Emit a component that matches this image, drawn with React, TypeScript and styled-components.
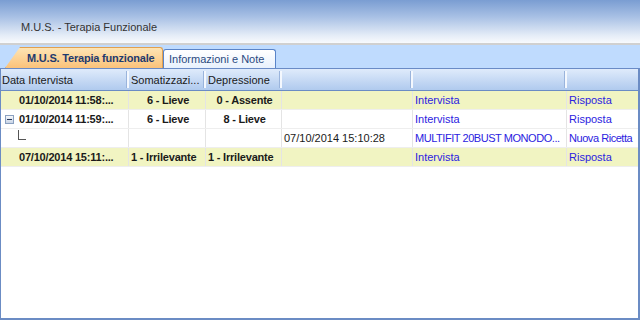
import React from 'react';
import styled, { createGlobalStyle } from 'styled-components';

const GlobalStyle = createGlobalStyle`
  html, body {
    margin: 0;
    padding: 0;
    background: #ffffff;
  }
  body {
    font-family: Tahoma, 'Liberation Sans', sans-serif;
    font-size: 11px;
  }
`;

const COLS = '128px 77px 76px 131px 154px 1fr';

const Window = styled.div`
  width: 640px;
  height: 320px;
  display: flex;
  flex-direction: column;
  overflow: hidden;
  background: #ffffff;
  font-family: 'Liberation Sans', sans-serif;
  font-size: 11px;
`;

const TitleBar = styled.div`
  height: 45px;
  display: flex;
  align-items: flex-end;
  padding: 0 0 10px 21px;
  box-sizing: border-box;
  background: linear-gradient(#7a9dd2 0%, #a9c1e5 40%, #e4ecf7 82%, #f8fafd 100%);
  border-bottom: 2px solid #d0d0d0;
  color: #333333;
`;

const TabStrip = styled.div`
  height: 24px;
  box-sizing: border-box;
  background: #bfdbfe;
  display: flex;
  align-items: flex-end;
  padding-left: 5px;
  border-bottom: 1px solid #6a8bc6;
`;

const Tab = styled.div<{ active?: boolean }>`
  height: ${p => (p.active ? '21px' : '19px')};
  display: flex;
  align-items: center;
  box-sizing: border-box;
  white-space: nowrap;
  ${p => p.active
    ? `
      width: 158px;
      padding: 0 0 0 21px;
      font-weight: bold;
      letter-spacing: -0.2px;
      color: #1e3a6e;
      background: linear-gradient(#fde4b4, #fbc27a);
      border: 1px solid #e0a050;
      border-bottom: none;
      border-radius: 3px 3px 0 0;
      clip-path: polygon(15px 0, 100% 0, 100% 100%, 0 100%);
    `
    : `
      width: 113px;
      padding: 0 0 0 5px;
      color: #2a4a80;
      background: linear-gradient(#ffffff, #e8f1fd);
      border: 1px solid #5a84c8;
      border-bottom: none;
      border-radius: 3px 3px 0 0;
    `}
`;

const Grid = styled.div`
  flex: 1;
  display: flex;
  flex-direction: column;
  border-left: 1px solid #6b8cc4;
  border-right: 2px solid #6b8cc4;
  border-bottom: 2px solid #6b8cc4;
`;

const HeaderRow = styled.div`
  display: grid;
  grid-template-columns: ${COLS};
  height: 22px;
  box-sizing: border-box;
  background: linear-gradient(#dfebfb, #b0caee);
  border-bottom: 1px solid #6b8cc4;
`;

const HeaderCell = styled.div`
  display: flex;
  align-items: center;
  padding-left: 2px;
  color: #1a1a1a;
  white-space: nowrap;
  overflow: hidden;
  border-right: 2px solid #f4f8fe;
  box-shadow: inset -1px 0 0 #9ab4dc;
  margin: 2px 0;
  &:first-child {
    margin-left: -1px;
  }
  &:last-child {
    border-right: none;
    box-shadow: none;
  }
`;

const Row = styled.div<{ shaded?: boolean }>`
  display: grid;
  grid-template-columns: ${COLS};
  height: 19px;
  background: ${p => (p.shaded ? '#f1f4c2' : '#ffffff')};
  border-bottom: 1px solid #eeeeee;
  box-sizing: border-box;
`;

const Cell = styled.div<{ bold?: boolean; link?: boolean; center?: boolean; tight?: boolean }>`
  display: flex;
  align-items: center;
  justify-content: ${p => (p.center ? 'center' : 'flex-start')};
  padding-left: 2px;
  font-weight: ${p => (p.bold ? 'bold' : 'normal')};
  letter-spacing: ${p => (p.tight ? '-0.45px' : p.bold ? '-0.2px' : '0')};
  color: ${p => (p.link ? '#2b22e0' : '#1a1a1a')};
  white-space: nowrap;
  overflow: hidden;
  border-right: 1px solid #e4e4e4;
  &:last-child {
    border-right: none;
  }
`;

const FirstCell = styled(Cell)`
  padding-left: 4px;
  gap: 5px;
`;

const Spacer = styled.span`
  width: 9px;
  flex: none;
`;

const Expander = styled.span`
  width: 9px;
  height: 9px;
  flex: none;
  box-sizing: border-box;
  border: 1px solid #8aa0c0;
  background: linear-gradient(#f6f8fb, #c8d4e6);
  position: relative;
  &::after {
    content: '';
    position: absolute;
    left: 1px;
    right: 1px;
    top: 3px;
    height: 1px;
    background: #2a3a5a;
  }
`;

const TreeLine = styled.span`
  width: 7px;
  height: 9px;
  margin: -6px 0 0 13px;
  border-left: 1px solid #555;
  border-bottom: 1px solid #555;
`;

const rows = [
  { date: '01/10/2014 11:58:...', som: '6 - Lieve', dep: '0 - Assente', shaded: true },
  { date: '01/10/2014 11:59:...', som: '6 - Lieve', dep: '8 - Lieve', expanded: true },
];

function App() {
  return (
    <Window>
      <GlobalStyle />
      <TitleBar>M.U.S. - Terapia Funzionale</TitleBar>
      <TabStrip>
        <Tab active>M.U.S. Terapia funzionale</Tab>
        <Tab>Informazioni e Note</Tab>
      </TabStrip>
      <Grid>
        <HeaderRow>
          <HeaderCell>Data Intervista</HeaderCell>
          <HeaderCell>Somatizzazi...</HeaderCell>
          <HeaderCell>Depressione</HeaderCell>
          <HeaderCell />
          <HeaderCell />
          <HeaderCell />
        </HeaderRow>
        {rows.map(r => (
          <Row key={r.date} shaded={r.shaded}>
            <FirstCell bold>
              {r.expanded ? <Expander /> : <Spacer />}
              {r.date}
            </FirstCell>
            <Cell bold center>{r.som}</Cell>
            <Cell bold center>{r.dep}</Cell>
            <Cell />
            <Cell link>Intervista</Cell>
            <Cell link>Risposta</Cell>
          </Row>
        ))}
        <Row>
          <FirstCell><TreeLine /></FirstCell>
          <Cell />
          <Cell />
          <Cell>07/10/2014 15:10:28</Cell>
          <Cell link tight>MULTIFIT 20BUST MONODO...</Cell>
          <Cell link tight>Nuova Ricetta</Cell>
        </Row>
        <Row shaded>
          <FirstCell bold><Spacer />07/10/2014 15:11:...</FirstCell>
          <Cell bold>1 - Irrilevante</Cell>
          <Cell bold>1 - Irrilevante</Cell>
          <Cell />
          <Cell link>Intervista</Cell>
          <Cell link>Risposta</Cell>
        </Row>
      </Grid>
    </Window>
  );
}

export default App;
